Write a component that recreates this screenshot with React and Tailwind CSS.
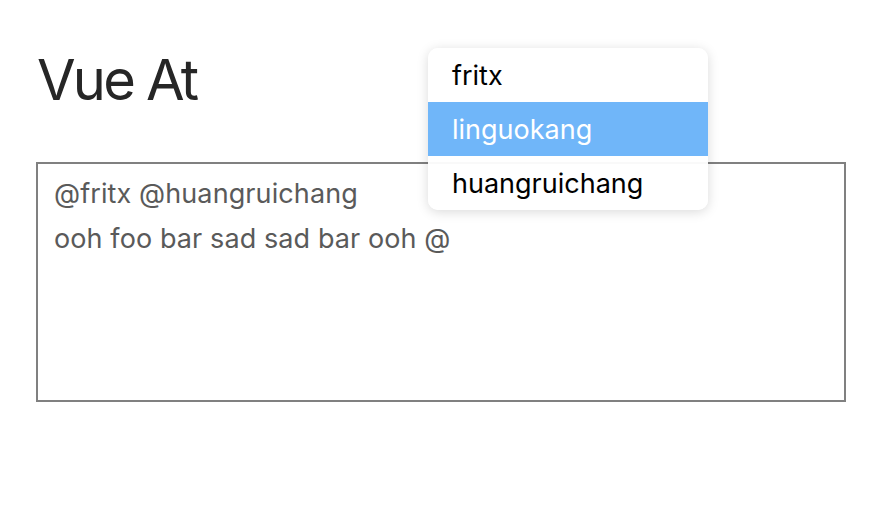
import React from "react";

export default function App() {
  const font = { fontFamily: 'Inter, "Liberation Sans", Arial, sans-serif' };
  return (
    <div className="relative w-[878px] h-[528px] bg-white" style={font}>
      <div className="flex flex-col px-[36px] pt-[50px]">
        <h1 className="text-[56px] leading-[60px] text-[#262626] tracking-[-2.8px] pl-[1px]">Vue At</h1>
        <textarea
          readOnly
          className="mt-[52px] w-[810px] h-[240px] border-2 border-[#808080] px-[16px] pt-[7px] text-[27px] leading-[45px] tracking-[0.1px] text-[#5a5a5a] resize-none outline-none"
          style={font}
          defaultValue={"@fritx @huangruichang\nooh foo bar sad sad bar ooh @"}
        />
      </div>
      <ul className="absolute left-[428px] top-[48px] w-[280px] rounded-[10px] bg-white/95 shadow-[0_2px_12px_rgba(0,0,0,0.15)] overflow-hidden text-[27px] text-black">
        <li className="h-[54px] flex items-center px-[24px] pt-[3px]">fritx</li>
        <li className="h-[54px] flex items-center px-[24px] pt-[3px] bg-[#70b6f9] text-white">linguokang</li>
        <li className="h-[54px] flex items-center px-[24px] pt-[3px]">huangruichang</li>
      </ul>
    </div>
  );
}
